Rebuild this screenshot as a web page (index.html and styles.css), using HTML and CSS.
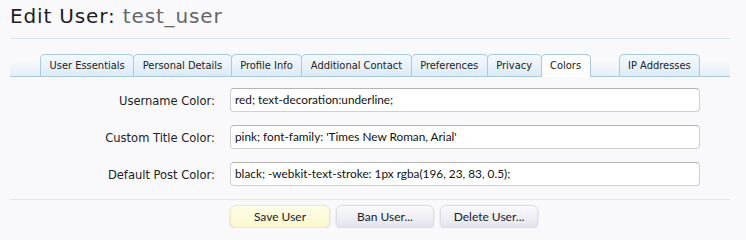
FILE: index.html
```html
<!DOCTYPE html>
<html>
<head>
<meta charset="utf-8">
<link rel="stylesheet" href="styles.css">
</head>
<body>
<div class="page">
  <h1 class="title">Edit User: <span class="name">test_user</span></h1>
  <div class="tabbar">
    <ul class="tabs">
      <li class="tab">User Essentials</li>
      <li class="tab">Personal Details</li>
      <li class="tab">Profile Info</li>
      <li class="tab">Additional Contact</li>
      <li class="tab">Preferences</li>
      <li class="tab">Privacy</li>
      <li class="tab active">Colors</li>
      <li class="tab spaced">IP Addresses</li>
    </ul>
  </div>
  <div class="form">
    <div class="row">
      <label class="label">Username Color:</label>
      <div class="input">red; text-decoration:underline;</div>
    </div>
    <div class="row">
      <label class="label">Custom Title Color:</label>
      <div class="input">pink; font-family: 'Times New Roman, Arial'</div>
    </div>
    <div class="row">
      <label class="label">Default Post Color:</label>
      <div class="input">black; -webkit-text-stroke: 1px rgba(196, 23, 83, 0.5);</div>
    </div>
  </div>
  <div class="buttons">
    <button class="btn primary">Save User</button>
    <button class="btn">Ban User...</button>
    <button class="btn">Delete User...</button>
  </div>
</div>
</body>
</html>
```
FILE: styles.css
```css
html, body {
  margin: 0;
  padding: 0;
  background: #f9f9fc;
}
.page {
  width: 720px;
  padding: 0 0 0 10px;
  font-family: "DejaVu Sans Condensed", "DejaVu Sans", sans-serif;
  font-stretch: condensed;
}
.title {
  margin: 0;
  padding: 3px 0 0 0;
  height: 39px;
  box-sizing: border-box;
  font-family: "DejaVu Sans", sans-serif;
  font-stretch: normal;
  font-weight: normal;
  font-size: 20px;
  letter-spacing: 0.85px;
  line-height: 26px;
  color: #1e1e1e;
  border-bottom: 1px solid #dbe7ef;
}
.title .name {
  color: #666;
}
.tabbar {
  margin-top: 15px;
  border-bottom: 1px solid #a9c9df;
  background: linear-gradient(to bottom, rgba(230,240,248,0) 0%, rgba(230,240,248,0) 30%, #e4eff8 100%);
}
.tabs {
  list-style: none;
  margin: 0;
  padding: 0 0 0 30px;
  display: flex;
  height: 22px;
}
.tab {
  height: 22px;
  box-sizing: border-box;
  padding: 0 8.5px;
  white-space: nowrap;
  font-size: 11px;
  line-height: 21px;
  color: #222;
  border: 1px solid #a9c9df;
  border-bottom: none;
  border-radius: 5px 5px 0 0;
  background: linear-gradient(to bottom, #f4f9fc 0%, #dcebf6 100%);
  margin-right: -1px;
  position: relative;
}
.tab.active {
  background: #fdfdfe;
  height: 23px;
  margin-bottom: -1px;
  z-index: 1;
}
.tab.spaced {
  margin-left: 29px;
  padding: 0 8.5px;
}
.form {
  padding-top: 11px;
  display: flex;
  flex-direction: column;
  gap: 13px;
  padding-bottom: 13px;
  border-bottom: 1px solid #d6ecee;
}
.row {
  display: flex;
  align-items: center;
}
.label {
  width: 205px;
  text-align: right;
  font-size: 12.8px;
  color: #222;
}
.input {
  margin-left: 15px;
  width: 470px;
  height: 24px;
  box-sizing: border-box;
  border: 1px solid #cfcfcf;
  border-top-color: #b4b4b4;
  border-radius: 4px;
  background: #fff;
  font-family: "Lato", sans-serif;
  font-stretch: normal;
  font-size: 11.8px;
  line-height: 22px;
  padding: 0 4px;
  color: #111;
}
.buttons {
  display: flex;
  gap: 6px;
  padding: 5px 0 0 220px;
}
.btn {
  height: 23px;
  border: 1px solid #dcdce6;
  border-radius: 6px;
  background: linear-gradient(to bottom, #fafafd 0%, #e4e4ee 100%);
  box-shadow: 0 1px 2px rgba(0,0,0,0.18);
  font-family: "Lato", sans-serif;
  font-size: 12px;
  color: #222;
  width: 98px;
  padding: 0;
}
.btn.primary {
  width: 100px;
  background: linear-gradient(to bottom, #fdfde8 0%, #fbf7cf 100%);
  border-color: #eeeac8;
}
```
